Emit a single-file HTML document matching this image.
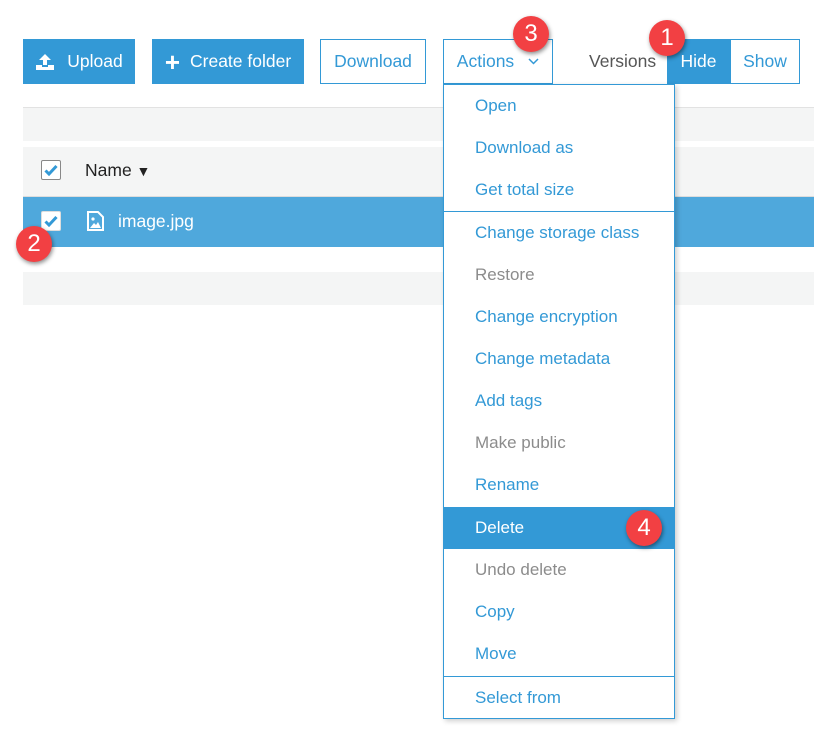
<!DOCTYPE html>
<html><head><style>
body{margin:0;width:814px;height:739px;background:#fff;font-family:"Liberation Sans",Arial,sans-serif;position:relative;overflow:hidden}
.a{position:absolute;box-sizing:border-box}
.btn{position:absolute;box-sizing:border-box;top:39px;height:45px;font-size:17.5px;display:flex;align-items:center;justify-content:center}
.pri{background:#3399d6;color:#fff}
.out{border:1px solid #3399d6;color:#3399d6;background:#fff}
.badge{position:absolute;width:36px;height:36px;border-radius:50%;background:#f24043;color:#fff;font-size:24px;display:flex;align-items:center;justify-content:center;box-shadow:1px 2px 4px rgba(0,0,0,.45);z-index:5}
.menu{left:443px;top:84px;width:232px;height:635px;border:1px solid #3399d6;background:#fff;box-shadow:2px 2px 5px rgba(0,0,0,.2);z-index:3}
.it{position:absolute;left:0;width:230px;height:42px;line-height:42px;padding-left:31px;box-sizing:border-box;font-size:17px;color:#3399d6}
.dis{color:#8c8c8c}
.sep{position:absolute;left:0;width:230px;height:1px;background:#3399d6}
.cb{position:absolute;width:20px;height:20px;border:1px solid #888;border-radius:2px;background:#fff;box-sizing:border-box}
</style></head><body>
<div class="btn pri" style="left:23px;width:112px"><svg width="20" height="18" viewBox="0 0 20 18" style="margin-right:12px"><path d="M10 1 L4 7 H8 V12 H12 V7 H16 Z" fill="#fff"/><path d="M1 12 H7 V14 H13 V12 H19 V17 H1 Z" fill="#fff"/></svg>Upload</div>
<div class="btn pri" style="left:152px;width:152px"><span style="font-size:26px;font-weight:bold;margin-right:10px;line-height:1">+</span>Create folder</div>
<div class="btn out" style="left:320px;width:106px">Download</div>
<div class="btn out" style="left:443px;width:110px">Actions<svg width="11" height="7" viewBox="0 0 11 7" style="margin-left:14px"><path d="M1 1 L5.5 5.5 L10 1" fill="none" stroke="#3399d6" stroke-width="1.5"/></svg></div>
<div class="a" style="left:589px;top:39px;height:45px;line-height:45px;font-size:17.5px;color:#555">Versions</div>
<div class="btn pri" style="left:667px;width:63px">Hide</div>
<div class="btn out" style="left:730px;width:70px">Show</div>

<div class="a" style="left:23px;top:107px;width:791px;height:34px;background:#f4f5f5;border-top:1px solid #e2e2e2"></div>
<div class="a" style="left:23px;top:147px;width:791px;height:50px;background:#f4f5f5;border-bottom:1px solid #ddd"></div>
<div class="cb" style="left:41px;top:160px"></div>
<svg class="a" style="left:44px;top:164px" width="14" height="12" viewBox="0 0 14 12"><path d="M1.5 6.5 L5 10 L12.5 2" fill="none" stroke="#3399d6" stroke-width="3"/></svg>
<div class="a" style="left:85px;top:160px;font-size:17.5px;color:#222">Name <span style="font-size:14px">&#9660;</span></div>
<div class="a" style="left:23px;top:197px;width:791px;height:50px;background:#4fa8dc"></div>
<div class="cb" style="left:41px;top:211px;border-color:#ddd"></div>
<svg class="a" style="left:44px;top:215px" width="14" height="12" viewBox="0 0 14 12"><path d="M1.5 6.5 L5 10 L12.5 2" fill="none" stroke="#3399d6" stroke-width="3"/></svg>
<svg class="a" style="left:87px;top:211px" width="17" height="20" viewBox="0 0 17 20"><path d="M1 1 H11 L16 6 V19 H1 Z" fill="none" stroke="#fff" stroke-width="2"/><circle cx="6" cy="8" r="1.6" fill="#fff"/><path d="M3 17 L7 12 L9 14 L11 11 L14 17 Z" fill="#fff"/></svg>
<div class="a" style="left:118px;top:211px;font-size:17.5px;color:#fff">image.jpg</div>
<div class="a" style="left:23px;top:272px;width:791px;height:33px;background:#f4f5f5"></div>

<div class="a menu">
<div class="it" style="top:0">Open</div>
<div class="it" style="top:42px">Download as</div>
<div class="it" style="top:84px">Get total size</div>
<div class="sep" style="top:126px"></div>
<div class="it" style="top:127px">Change storage class</div>
<div class="it dis" style="top:169px">Restore</div>
<div class="it" style="top:211px">Change encryption</div>
<div class="it" style="top:253px">Change metadata</div>
<div class="it" style="top:295px">Add tags</div>
<div class="it dis" style="top:337px">Make public</div>
<div class="it" style="top:379px">Rename</div>
<div class="it" style="top:422px;background:#3399d6;color:#fff">Delete</div>
<div class="it dis" style="top:464px">Undo delete</div>
<div class="it" style="top:506px">Copy</div>
<div class="it" style="top:548px">Move</div>
<div class="sep" style="top:591px"></div>
<div class="it" style="top:592px">Select from</div>
</div>

<div class="badge" style="left:649px;top:20px">1</div>
<div class="badge" style="left:513px;top:16px">3</div>
<div class="badge" style="left:16px;top:226px">2</div>
<div class="badge" style="left:626px;top:510px">4</div>
</body></html>
